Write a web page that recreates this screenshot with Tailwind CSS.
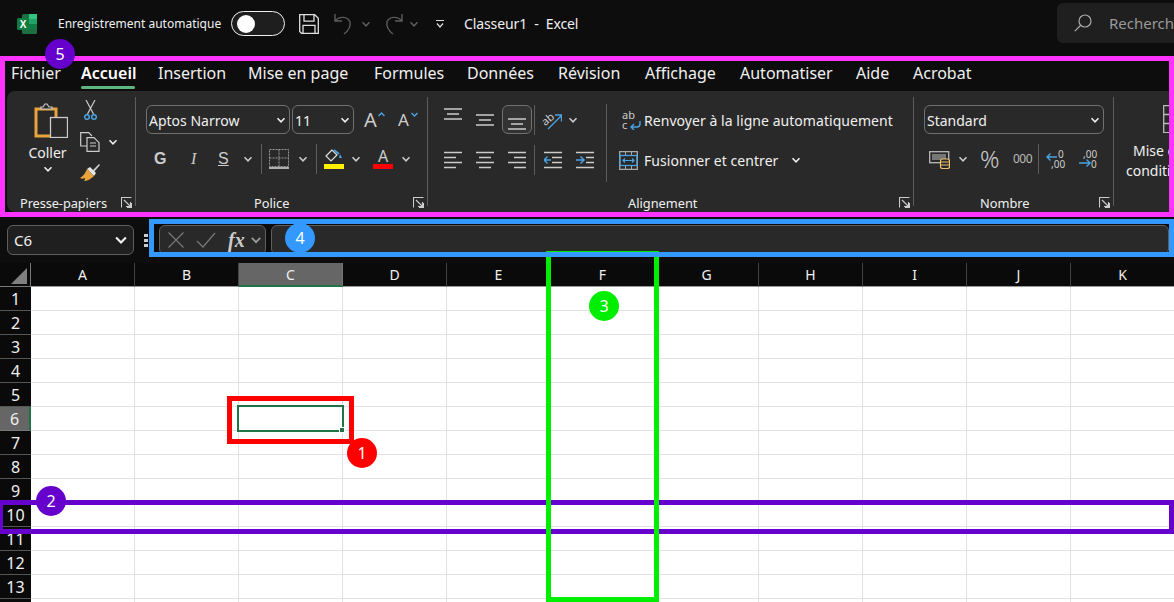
<!DOCTYPE html>
<html lang="fr">
<head>
  <meta charset="UTF-8" />
  <title>Classeur1 - Excel</title>
  <script src="https://cdn.jsdelivr.net/npm/@tailwindcss/browser@4"></script>
</head>
<body class="bg-[#0d0d0d] w-[1174px] h-[602px] overflow-hidden relative font-['Noto_Sans','Open_Sans',sans-serif] text-[#f0f0f0]">
  <!-- icones partagees -->
  <svg class="hidden">
    <symbol id="chev" viewBox="0 0 10 10"><path d="M1.5 3.2 5 6.8 8.5 3.2" fill="none" stroke="currentColor" stroke-width="1.5"/></symbol>
    <symbol id="launch" viewBox="0 0 11 11"><path d="M.5 10.5V.5h10M3 3l6.5 6.5M9.500 5v4.500H5M10.500 6v4.500H6" fill="none" stroke="#ccc" stroke-width="1.100"/></symbol>
  </svg>

  <!-- barre de titre -->
  <div class="h-[56px] flex items-center relative">
    <svg class="ml-[17px] mb-[9px] w-[20px] h-[20px]" viewBox="0 0 20 20"><rect x="5" y="0" width="15" height="20" rx="1.500" fill="#1d6f42"/><rect x="12" y="0" width="8" height="5" fill="#33c481"/><rect x="12" y="5" width="8" height="5" fill="#21a366"/><rect x="12" y="10" width="8" height="5" fill="#107c41"/><rect x="0" y="4" width="12" height="12" rx="1.500" fill="#107c41"/><text x="6" y="13.500" text-anchor="middle" font-size="10" font-weight="700" fill="#fff" font-family="Liberation Sans">X</text></svg>
    <span class="ml-[21px] mb-[9px] w-[173px] text-[12px] whitespace-nowrap">Enregistrement automatique</span>
    <div class="mb-[9px] w-[54px] h-[25px] rounded-full border border-[#f0f0f0] bg-[#1e1e1e] flex items-center pl-[5px]"><div class="w-[18px] h-[18px] rounded-full bg-white"></div></div>
    <svg class="ml-[14px] mb-[9px] w-[20px] h-[20px]" viewBox="0 0 20 20" fill="none" stroke="#e0e0e0" stroke-width="1.300"><path d="M.7.7h15l3.600 3.600v15H2.500L.7 17.500z"/><path d="M5 .7v6.500h10V.7M4 19.300v-8h12v8"/></svg>
    <svg class="ml-[15px] mb-[9px] w-[19px] h-[22px]" viewBox="0 0 19 22" fill="none" stroke="#5c5c5c" stroke-width="1.400"><path d="M1 1v7h7M1 8c4-5 13-5 15 1 1 5-2 9-6 12"/></svg>
    <svg class="ml-[8px] mb-[9px] w-[10px] h-[10px] text-[#5c5c5c]"><use href="#chev"/></svg>
    <svg class="ml-[13px] mb-[9px] w-[19px] h-[22px]" viewBox="0 0 19 22" fill="none" stroke="#5c5c5c" stroke-width="1.400"><path d="M18 1v7h-7M18 8C14 3 5 3 3 9c-1 5 2 9 6 12"/></svg>
    <svg class="ml-[6px] mb-[9px] w-[10px] h-[10px] text-[#5c5c5c]"><use href="#chev"/></svg>
    <svg class="ml-[16px] mb-[9px] w-[10px] h-[10px]" viewBox="0 0 10 10" fill="none" stroke="#ddd" stroke-width="1.200"><path d="M1 1.500h8M2 4.500l3 3.500 3-3.500"/></svg>
    <span class="ml-[19px] mb-[9px] text-[14px] whitespace-pre tracking-[-0.1px]">Classeur1  -  Excel</span>
    <div class="absolute left-[1057px] top-[3px] w-[130px] h-[40px] rounded-md bg-[#1f1f1f] flex items-center overflow-hidden">
      <svg class="ml-[17px] w-[18px] h-[18px]" viewBox="0 0 18 18" fill="none" stroke="#aaa" stroke-width="1.200"><circle cx="11" cy="7" r="6"/><path d="M6.500 11.500.8 17.200"/></svg>
      <span class="ml-[17px] text-[15px] text-[#999] whitespace-nowrap">Recherche</span>
    </div>
  </div>

  <!-- onglets et ruban -->
  <div class="h-[161px] pt-[5px] pb-[5px] pl-[7px] pr-[5px] flex flex-col">
    <div class="h-[30px] pb-[7px] flex items-center text-[16px] -ml-[7px] pl-[11px] whitespace-nowrap">
      <span class="w-[70px]">Fichier</span>
      <span class="w-[77px] relative font-semibold text-white">Accueil<span class="absolute left-0 top-[25px] w-[54px] h-[3px] bg-[#5fb57f] rounded-sm"></span></span>
      <span class="w-[90px]">Insertion</span>
      <span class="w-[126px]">Mise en page</span>
      <span class="w-[93px]">Formules</span>
      <span class="w-[91px]">Données</span>
      <span class="w-[87px]">Révision</span>
      <span class="w-[95px]">Affichage</span>
      <span class="w-[116px]">Automatiser</span>
      <span class="w-[57px]">Aide</span>
      <span>Acrobat</span>
    </div>
    <div class="h-[121px] bg-[#292929] rounded-l-lg flex overflow-hidden text-[14px] relative">

      <!-- Presse-papiers -->
      <div class="w-[128px] shrink-0 relative flex">
        <div class="w-[74px] pt-[11px] flex flex-col items-center pl-[7px]">
          <svg class="ml-[6px] w-[34px] h-[36px]" viewBox="0 0 34 36" fill="none"><path d="M2 7h20v27H2z" stroke="#e8a33d" stroke-width="3"/><path d="M7 7h11V5h-3l-2-3h-2L9 5H7z" fill="#292929" stroke="#ccc" stroke-width="1.200"/><rect x="16.500" y="15.500" width="17" height="20" fill="#292929" stroke="#ccc" stroke-width="1.300"/></svg>
          <span class="mt-[5px] leading-[20px] text-[14px]">Coller</span>
          <svg class="mt-[1px] w-[10px] h-[10px]"><use href="#chev"/></svg>
        </div>
        <div class="flex flex-col pt-[9px] gap-[11px] -ml-[1px]">
          <svg class="ml-[4px] w-[13px] h-[21px]" viewBox="0 0 13 21" fill="none"><path d="M2 0l7.500 14M11 0 3.500 14" stroke="#ccc" stroke-width="1.200"/><circle cx="3" cy="17" r="2.300" stroke="#4aa3e0" stroke-width="1.500"/><circle cx="10" cy="17" r="2.300" stroke="#4aa3e0" stroke-width="1.500"/></svg>
          <div class="flex items-center">
            <svg class="w-[20px] h-[20px]" viewBox="0 0 20 20" fill="none" stroke="#ccc" stroke-width="1.200"><path d="M7 14H.7V.7h8L12 4"/><path d="M7 5.700h7l5 5v8.600H7zM10 11h6M10 14h6"/></svg>
            <svg class="ml-[8px] w-[10px] h-[10px]"><use href="#chev"/></svg>
          </div>
          <svg class="w-[20px] h-[19px]" viewBox="0 0 20 19"><path d="M13 7 19 1l1 1-6 7z" fill="#ccc"/><path d="M10 4l6 6-2 3L7 6z" fill="#e6e6e6"/><path d="M7 6l7 7c-3 3-7 5-10 5 1-1 1-2 1-3-2 1-3 1-5 0 3-2 5-4 7-9z" fill="#e8a33d"/></svg>
        </div>
        <span class="absolute left-[13px] -bottom-[1px] text-[12.800px] leading-[20px] tracking-[-0.1px]">Presse-papiers</span>
        <svg class="absolute left-[114px] bottom-[4px] w-[11px] h-[11px]"><use href="#launch"/></svg>
      </div>
      <div class="w-px my-[6px] bg-[#5e5e5e] shrink-0"></div>

      <!-- Police -->
      <div class="w-[291px] shrink-0 relative pt-[14px] pl-[10px]">
        <div class="flex items-center h-[29px]">
          <div class="w-[144px] h-[29px] pt-[1px] rounded-md border border-[#707070] flex items-center pl-[2px] pr-[3px] justify-between text-[14px]">Aptos Narrow<svg class="w-[10px] h-[10px]"><use href="#chev"/></svg></div>
          <div class="ml-[2px] w-[62px] h-[29px] pt-[1px] rounded-md border border-[#707070] flex items-center pl-[2px] pr-[3px] justify-between text-[14px]">11<svg class="w-[10px] h-[10px]"><use href="#chev"/></svg></div>
          <span class="ml-[10px] w-[14px] text-[20px] leading-none text-[#ccc]">A</span>
          <svg class="w-[7px] h-[5px] mb-[10px]" viewBox="0 0 7 5" fill="none" stroke="#4aa3e0" stroke-width="1.400"><path d="M.5 4 3.500 1l3 3"/></svg>
          <span class="ml-[13px] w-[13px] text-[17px] leading-none text-[#ccc]">A</span>
          <svg class="w-[7px] h-[5px] mb-[10px]" viewBox="0 0 7 5" fill="none" stroke="#4aa3e0" stroke-width="1.400"><path d="M.5 1l3 3 3-3"/></svg>
        </div>
        <div class="flex items-center h-[30px] mt-[10px] text-[#ccc]">
          <span class="ml-[8px] w-[13px] text-[16px] font-bold font-['Liberation_Sans',sans-serif]">G</span>
          <span class="ml-[24px] w-[8px] text-[16px] italic font-['Liberation_Serif',serif]">I</span>
          <span class="ml-[19px] w-[10px] text-[16px] underline font-['Liberation_Sans',sans-serif]">S</span>
          <svg class="ml-[15px] w-[10px] h-[10px]"><use href="#chev"/></svg>
          <div class="ml-[8px] w-px h-[30px] bg-[#5e5e5e]"></div>
          <svg class="ml-[7px] w-[20px] h-[20px]" viewBox="0 0 20 20" fill="none" stroke="#999" stroke-width="1" stroke-dasharray="2 1"><path d="M.5.500h19v17H.5zM10 .5v17M.5 9h19"/><path d="M0 19h20" stroke="#ddd" stroke-width="1.500" stroke-dasharray="none"/></svg>
          <svg class="ml-[9px] w-[10px] h-[10px]"><use href="#chev"/></svg>
          <div class="ml-[8px] w-px h-[30px] bg-[#5e5e5e]"></div>
          <div class="ml-[7px] w-[20px] flex flex-col items-center">
            <svg class="w-[18px] h-[14px]" viewBox="0 0 18 14" fill="none"><path d="M7 1 1 7l5 5 6-6z" stroke="#ddd" stroke-width="1.200"/><path d="M9 1l5 4" stroke="#4aa3e0" stroke-width="2"/><path d="M15 5l2 4h-3z" fill="#4aa3e0"/></svg>
            <div class="w-[20px] h-[5px] bg-[#ffef00] mt-[1px]"></div>
          </div>
          <svg class="ml-[7px] w-[10px] h-[10px]"><use href="#chev"/></svg>
          <div class="ml-[12px] w-[20px] flex flex-col items-center">
            <span class="text-[16px] leading-[14px] text-[#ccc]">A</span>
            <div class="w-[20px] h-[5px] bg-[#ff0000] mt-[1px]"></div>
          </div>
          <svg class="ml-[8px] w-[10px] h-[10px]"><use href="#chev"/></svg>
        </div>
        <span class="absolute left-[118px] -bottom-[1px] text-[12.800px] leading-[20px]">Police</span>
        <svg class="absolute left-[277px] bottom-[4px] w-[11px] h-[11px]"><use href="#launch"/></svg>
      </div>
      <div class="w-px my-[6px] bg-[#5e5e5e] shrink-0"></div>

      <!-- Alignement -->
      <div class="w-[485px] shrink-0 relative flex pt-[14px] pl-[16px]">
        <div class="w-[150px]">
          <div class="flex items-center h-[29px] text-[#ccc]">
            <svg class="w-[18px] h-[18px] mb-[5px]" viewBox="0 0 18 18" fill="none" stroke="#ccc" stroke-width="1.300"><path d="M0 1h18M3 6h12M0 11h18"/></svg>
            <svg class="ml-[14px] w-[18px] h-[18px]" viewBox="0 0 18 18" fill="none" stroke="#ccc" stroke-width="1.300"><path d="M0 4h18M3 9h12M0 14h18"/></svg>
            <div class="ml-[8px] w-[30px] h-[29px] border border-[#707070] rounded-md bg-[#333] flex items-center justify-center"><svg class="w-[18px] h-[18px] mt-[5px]" viewBox="0 0 18 18" fill="none" stroke="#ccc" stroke-width="1.300"><path d="M0 6h18M3 11h12M0 16h18"/></svg></div>
            <div class="ml-[2px] w-px h-[30px] bg-[#5e5e5e]"></div>
            <svg class="ml-[7px] w-[20px] h-[20px]" viewBox="0 0 20 20" fill="none"><text x="0" y="13" transform="rotate(-40 6 10)" font-size="11" fill="#ccc" stroke="none" font-family="Noto Sans">ab</text><path d="M6 19 19 6M13 5h6.500v6.500" stroke="#4aa3e0" stroke-width="1.400"/></svg>
            <svg class="ml-[6px] w-[10px] h-[10px]"><use href="#chev"/></svg>
          </div>
          <div class="flex items-center h-[30px] mt-[11px]">
            <svg class="w-[18px] h-[18px]" viewBox="0 0 18 18" fill="none" stroke="#ccc" stroke-width="1.300"><path d="M0 1.500h18M0 6.500h12M0 11.500h18M0 16.500h12"/></svg>
            <svg class="ml-[14px] w-[18px] h-[18px]" viewBox="0 0 18 18" fill="none" stroke="#ccc" stroke-width="1.300"><path d="M0 1.500h18M3 6.500h12M0 11.500h18M3 16.500h12"/></svg>
            <svg class="ml-[14px] w-[18px] h-[18px]" viewBox="0 0 18 18" fill="none" stroke="#ccc" stroke-width="1.300"><path d="M0 1.500h18M6 6.500h12M0 11.500h18M6 16.500h12"/></svg>
            <div class="ml-[8px] mr-[9px] w-px h-[30px] bg-[#5e5e5e]"></div>
            <svg class="w-[18px] h-[18px]" viewBox="0 0 18 18" fill="none" stroke="#ccc" stroke-width="1.300"><path d="M0 1.500h18M8 6.500h10M8 11.500h10M0 16.500h18"/><path d="M7 9H0M3.500 5.500 0 9l3.500 3.500" stroke="#4aa3e0" stroke-width="1.500"/></svg>
            <svg class="ml-[14px] w-[18px] h-[18px]" viewBox="0 0 18 18" fill="none" stroke="#ccc" stroke-width="1.300"><path d="M0 1.500h18M10 6.500h8M10 11.500h8M0 16.500h18"/><path d="M0 9h8M4.500 5.500 8 9l-3.500 3.500" stroke="#4aa3e0" stroke-width="1.500"/></svg>
          </div>
        </div>
        <div class="w-px h-[78px] -mt-[1px] bg-[#5e5e5e] ml-[12px] shrink-0"></div>
        <div class="ml-[12px] flex flex-col whitespace-nowrap text-[14px] tracking-[0.05px]">
          <div class="h-[29px] pt-[1px] flex items-center">
            <svg class="ml-[3px] w-[19px] h-[20px]" viewBox="0 0 19 20"><text x="0" y="9" font-size="11" fill="#ccc" font-family="Noto Sans">ab</text><text x="0" y="19" font-size="11" fill="#ccc" font-family="Noto Sans">c</text><path d="M18 11v3c0 2-1 3-3 3H9M12 14l-3 3 3 3" fill="none" stroke="#4aa3e0" stroke-width="1.400"/></svg>
            <span class="ml-[3px]">Renvoyer à la ligne automatiquement</span>
          </div>
          <div class="h-[30px] mt-[11px] flex items-center">
            <svg class="w-[19px] h-[19px]" viewBox="0 0 19 19" fill="none"><path d="M.7.700h17.600v17.600H.7z" stroke="#aaa" stroke-width="1.300"/><path d="M6.500.7v3.800M12.500.7v3.800M6.500 14.500v3.800M12.500 14.500v3.800" stroke="#aaa"/><rect x="1" y="4.500" width="17" height="10" stroke="#4aa3e0" stroke-width="1.300"/><path d="M4 9.500h11M6 7.500l-2 2 2 2M13 7.500l2 2-2 2" stroke="#4aa3e0" stroke-width="1.200"/></svg>
            <span class="ml-[6px]">Fusionner et centrer</span>
            <svg class="ml-[13px] w-[10px] h-[10px]"><use href="#chev"/></svg>
          </div>
        </div>
        <span class="absolute left-[200px] -bottom-[1px] text-[12.800px] leading-[20px]">Alignement</span>
        <svg class="absolute left-[471px] bottom-[4px] w-[11px] h-[11px]"><use href="#launch"/></svg>
      </div>
      <div class="w-px my-[6px] bg-[#5e5e5e] shrink-0"></div>

      <!-- Nombre -->
      <div class="w-[199px] shrink-0 relative pt-[14px] pl-[10px]">
        <div class="w-[180px] h-[29px] pt-[1px] rounded-md border border-[#707070] flex items-center pl-[2px] pr-[3px] justify-between text-[14px]">Standard<svg class="w-[10px] h-[10px]"><use href="#chev"/></svg></div>
        <div class="flex items-center h-[30px] mt-[10px] text-[#ccc]">
          <svg class="ml-[5px] w-[21px] h-[20px]" viewBox="0 0 21 20" fill="none"><rect x=".7" y="2.700" width="19" height="11" stroke="#bbb" stroke-width="1.300"/><rect x="3" y="5" width="14" height="6" fill="#777"/><rect x="11.500" y="10" width="9" height="9.500" rx="2" fill="#292929" stroke="#efc06c" stroke-width="1.200"/><path d="M12 13h8M12 16h8" stroke="#efc06c"/></svg>
          <svg class="ml-[8px] w-[10px] h-[10px]"><use href="#chev"/></svg>
          <span class="ml-[12px] w-[22px] text-[24px] leading-none font-light text-[#ccc]">%</span>
          <span class="ml-[11px] w-[22px] text-[12px] tracking-[-0.5px] text-[#bbb]">000</span>
          <div class="ml-[3px] w-px h-[30px] bg-[#5e5e5e]"></div>
          <svg class="ml-[7px] w-[20px] h-[20px]" viewBox="0 0 20 20"><text x="12" y="9" font-size="10" fill="#ccc" font-family="Noto Sans">0</text><text x="5" y="19" font-size="10" fill="#ccc" font-family="Noto Sans">,00</text><path d="M11 8H1M4.500 4.500 1 8l3.500 3.500" fill="none" stroke="#4aa3e0" stroke-width="1.400"/></svg>
          <svg class="ml-[12px] w-[20px] h-[20px]" viewBox="0 0 20 20"><text x="5" y="9" font-size="10" fill="#ccc" font-family="Noto Sans">,00</text><text x="13" y="19" font-size="10" fill="#ccc" font-family="Noto Sans">0</text><path d="M1 14h11M8.500 10.500 12 14l-3.500 3.500" fill="none" stroke="#4aa3e0" stroke-width="1.400"/></svg>
        </div>
        <span class="absolute left-[66px] -bottom-[1px] text-[12.800px] leading-[20px]">Nombre</span>
        <svg class="absolute left-[185px] bottom-[4px] w-[11px] h-[11px]"><use href="#launch"/></svg>
      </div>
      <div class="w-px my-[6px] bg-[#5e5e5e] shrink-0"></div>

      <!-- Mise en forme conditionnelle (coupe a droite) -->
      <div class="w-[60px] shrink-0 relative overflow-hidden">
        <svg class="absolute left-[49px] top-[14px] w-[20px] h-[28px]" viewBox="0 0 20 28" fill="none" stroke="#bbb" stroke-width="1.300"><path d="M.7.700h19v27H.7zM.7 9.500h19M.7 18.500h19"/></svg>
        <div class="absolute left-[12px] top-[50px] text-[14px] leading-[20px] whitespace-nowrap text-center">
          <div class="pl-[7px] text-left">Mise en forme</div>
          <div class="text-left">conditionnelle</div>
        </div>
      </div>
    </div>
  </div>

  <!-- barre de formule -->
  <div class="h-[46px] flex pt-[8px] pl-[7px] pr-[5px]">
    <div class="w-[127px] h-[30px] rounded-md border border-[#5e5e5e] bg-[#1f1f1f] flex items-center justify-between pl-[6px] pr-[5px] text-[15px]">C6<svg class="w-[14px] h-[14px]"><use href="#chev"/></svg></div>
    <div class="ml-[10px] w-[4px] flex flex-col gap-[2px] mt-[9px]"><div class="w-[4px] h-[3px] bg-[#ccc]"></div><div class="w-[4px] h-[3px] bg-[#ccc]"></div><div class="w-[4px] h-[3px] bg-[#ccc]"></div></div>
    <div class="ml-[11px] w-[107px] h-[30px] rounded-md border border-[#5e5e5e] bg-[#292929] flex items-center pl-[8px]">
      <svg class="w-[16px] h-[16px]" viewBox="0 0 16 16" fill="none" stroke="#777" stroke-width="1.300"><path d="M.5.500l15 15M15.500.5l-15 15"/></svg>
      <svg class="ml-[12px] w-[20px] h-[16px]" viewBox="0 0 20 16" fill="none" stroke="#777" stroke-width="1.300"><path d="M1 9l6 6L19 1"/></svg>
      <span class="ml-[12px] w-[18px] text-[20px] font-bold italic leading-none text-[#ccc] font-['Liberation_Serif',serif]">fx</span>
      <svg class="ml-[4px] w-[12px] h-[12px] text-[#999]"><use href="#chev"/></svg>
    </div>
    <div class="ml-[5px] flex-1 h-[30px] rounded-md border border-[#5e5e5e] bg-[#292929]"></div>
  </div>

  <!-- feuille -->
  <div id="sheet" class="text-[14px]">
    <div class="flex h-[24px] bg-[#0a0a0a]" id="colHead">
      <div class="w-[31px] h-[24px] shrink-0 border-r border-b border-[#777] relative">
        <div class="absolute left-[11px] top-[5px] w-0 h-0 border-l-[16px] border-l-transparent border-b-[16px] border-b-[#7f7f7f]"></div>
      </div>
    </div>
    <div id="rows"></div>
  </div>

  <!-- annotations -->
  <div class="absolute left-[227px] top-[396px] w-[127px] h-[48px] border-[5px] border-[#ff0000]"></div>
  <div class="absolute left-[237px] top-[405px] w-[107px] h-[27px] border-2 border-[#217346]"><div class="absolute -right-[3px] -bottom-[3px] w-[6px] h-[6px] bg-[#217346] border border-white"></div></div>
  <div class="absolute -left-[2px] top-[500px] w-[1176px] h-[34px] border-[5px] border-[#6600cc]"></div>
  <div class="absolute left-[546px] top-[251px] w-[113px] h-[351px] border-[5px] border-[#00ee00]"></div>
  <div class="absolute left-[149px] top-[219px] w-[1025px] h-[38px] border-[5px] border-[#3399ff]"></div>
  <div class="absolute left-0 top-[56px] w-[1174px] h-[161px] border-[5px] border-[#ff33ff]"></div>

  <div class="absolute left-[347px] top-[438px] w-[30px] h-[30px] rounded-full bg-[#ff0000] text-white flex items-center justify-center text-[16px]">1</div>
  <div class="absolute left-[36px] top-[486px] w-[30px] h-[30px] rounded-full bg-[#6600cc] text-white flex items-center justify-center text-[16px]">2</div>
  <div class="absolute left-[589px] top-[291px] w-[30px] h-[30px] rounded-full bg-[#00ee00] text-white flex items-center justify-center text-[16px]">3</div>
  <div class="absolute left-[285px] top-[223px] w-[30px] h-[30px] rounded-full bg-[#3399ff] text-white flex items-center justify-center text-[16px]">4</div>
  <div class="absolute left-[45px] top-[39px] w-[30px] h-[30px] rounded-full bg-[#6600cc] text-white flex items-center justify-center text-[16px]">5</div>

  <script>
    // colonnes A..K et lignes 1..14
    const letters = "ABCDEFGHIJK".split("");
    const colHead = document.getElementById("colHead");
    letters.forEach(function (l) {
      const d = document.createElement("div");
      d.className = l === "C"
        ? "w-[104px] h-[24px] shrink-0 flex items-center justify-center bg-[#666666] border-b-2 border-[#217346] border-r border-r-[#777]"
        : "w-[104px] h-[24px] shrink-0 flex items-center justify-center border-b border-[#999] border-r border-r-[#444]";
      d.textContent = l;
      colHead.appendChild(d);
    });
    const rows = document.getElementById("rows");
    for (let r = 1; r <= 14; r++) {
      const row = document.createElement("div");
      row.className = "flex h-[24px]";
      const head = document.createElement("div");
      head.className = r === 6
        ? "w-[31px] h-[24px] shrink-0 flex items-center justify-center text-[16px] bg-[#666666] border-b border-[#777] border-r-2 border-r-[#217346]"
        : "w-[31px] h-[24px] shrink-0 flex items-center justify-center text-[16px] bg-[#0a0a0a] border-b border-[#555]";
      head.textContent = r;
      row.appendChild(head);
      letters.forEach(function () {
        const c = document.createElement("div");
        c.className = "w-[104px] h-[24px] shrink-0 bg-white border-r border-b border-[#e0e0e0]";
        row.appendChild(c);
      });
      rows.appendChild(row);
    }
  </script>
</body>
</html>
